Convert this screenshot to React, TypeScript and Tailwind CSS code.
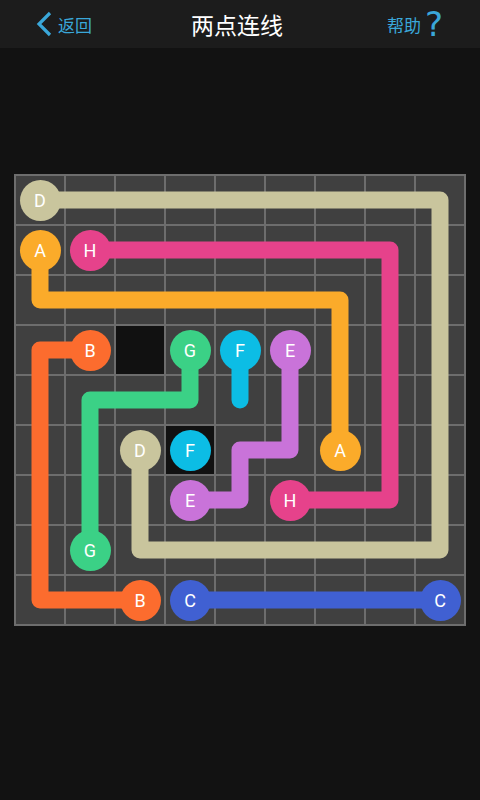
import React from 'react';

type Pt = [number, number];

// cell centre in board px (board is 452 wide, 2px lines, 48px cells)
const c = (i: number) => 26 + 50 * i;

const flows: { color: string; label: string; pts: Pt[]; ends: Pt[] }[] = [
  { color: '#c9c59d', label: 'D', pts: [[0, 0], [8, 0], [8, 7], [2, 7], [2, 5]], ends: [[0, 0], [2, 5]] },
  { color: '#fbab2a', label: 'A', pts: [[0, 1], [0, 2], [6, 2], [6, 5]], ends: [[0, 1], [6, 5]] },
  { color: '#e6428b', label: 'H', pts: [[1, 1], [7, 1], [7, 6], [5, 6]], ends: [[1, 1], [5, 6]] },
  { color: '#fc6c2e', label: 'B', pts: [[1, 3], [0, 3], [0, 8], [2, 8]], ends: [[1, 3], [2, 8]] },
  { color: '#3bd186', label: 'G', pts: [[3, 3], [3, 4], [1, 4], [1, 7]], ends: [[3, 3], [1, 7]] },
  { color: '#0cbde5', label: 'F', pts: [[4, 3], [4, 4]], ends: [[4, 3], [3, 5]] },
  { color: '#c973d9', label: 'E', pts: [[5, 3], [5, 5], [4, 5], [4, 6], [3, 6]], ends: [[5, 3], [3, 6]] },
  { color: '#4060d2', label: 'C', pts: [[3, 8], [8, 8]], ends: [[3, 8], [8, 8]] },
];

const blocked = new Set(['2,3', '3,5']);

const Board = () => {
  const cells = [];
  for (let r = 0; r < 9; r++) {
    for (let col = 0; col < 9; col++) {
      const dark = blocked.has(`${col},${r}`);
      cells.push(<div key={`${r}-${col}`} className={dark ? 'bg-[#111111]' : 'bg-[#404040]'} />);
    }
  }

  return (
    <div className="relative ml-[14px] mt-[126px] h-[452px] w-[452px]">
      <div className="grid h-full w-full grid-cols-9 grid-rows-9 gap-[2px] bg-[#6d6d6d] p-[2px]">{cells}</div>

      <svg className="absolute inset-0" width="452" height="452" viewBox="0 0 452 452">
        {flows.map((f) => (
          <polyline
            key={f.label}
            points={f.pts.map(([x, y]) => `${c(x)},${c(y)}`).join(' ')}
            fill="none"
            stroke={f.color}
            strokeWidth={17}
            strokeLinecap="round"
            strokeLinejoin="round"
          />
        ))}
      </svg>

      {flows.map((f) =>
        f.ends.map(([x, y]) => (
          <div
            key={`${f.label}-${x}-${y}`}
            className="absolute flex h-[41px] w-[41px] items-center justify-center rounded-full text-[18px] text-white [font-family:Roboto,'Liberation_Sans',sans-serif]"
            style={{ left: c(x) - 20.5, top: c(y) - 20.5, backgroundColor: f.color }}
          >
            {f.label}
          </div>
        ))
      )}
    </div>
  );
};

export default function App() {
  return (
    <div className="min-h-[800px] w-[480px] bg-[#121212] [font-family:'Noto_Sans_CJK_SC',sans-serif]">
      <header className="flex h-12 items-center bg-[#1c1c1c] pl-[35px] pr-[37px]">
        <div className="flex flex-1 items-center gap-[5px] text-[#3aa7d9]">
          <svg width="18" height="26" viewBox="0 0 18 26">
            <polyline points="15,2 4,13 15,24" fill="none" stroke="#3aa7d9" strokeWidth="3.2" strokeLinejoin="miter" />
          </svg>
          <span className="text-[17px] leading-none">返回</span>
        </div>
        <h1 className="pr-[4px] text-[23px] leading-none text-white">两点连线</h1>
        <div className="flex flex-1 items-center justify-end gap-[4px] text-[#3aa7d9]">
          <span className="text-[17px] leading-none">帮助</span>
          <span className="text-[34px] leading-none [font-family:'DejaVu_Sans',sans-serif]">?</span>
        </div>
      </header>
      <Board />
    </div>
  );
}
